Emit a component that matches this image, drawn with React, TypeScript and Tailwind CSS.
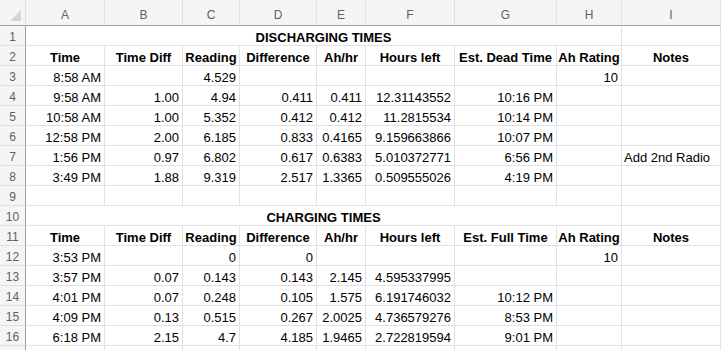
import React from 'react';

type Cell = { v?: string; align?: 'l' | 'c' | 'r'; bold?: boolean; span?: boolean };

const COLS = ['A', 'B', 'C', 'D', 'E', 'F', 'G', 'H', 'I'];

const hdr = (last: string): Cell[] =>
  ['Time', 'Time Diff', 'Reading', 'Difference', 'Ah/hr', 'Hours left', last, 'Ah Rating', 'Notes'].map(v => ({
    v,
    align: 'c',
    bold: true,
  }));

const nums = (vals: string[]): Cell[] => vals.map(v => ({ v, align: 'r' }));

const ROWS: Cell[][] = [
  [{ v: 'DISCHARGING TIMES', align: 'c', bold: true, span: true }, {}],
  hdr('Est. Dead Time'),
  nums(['8:58 AM', '', '4.529', '', '', '', '', '10', '']),
  nums(['9:58 AM', '1.00', '4.94', '0.411', '0.411', '12.31143552', '10:16 PM', '', '']),
  nums(['10:58 AM', '1.00', '5.352', '0.412', '0.412', '11.2815534', '10:14 PM', '', '']),
  nums(['12:58 PM', '2.00', '6.185', '0.833', '0.4165', '9.159663866', '10:07 PM', '', '']),
  [...nums(['1:56 PM', '0.97', '6.802', '0.617', '0.6383', '5.010372771', '6:56 PM', '']), { v: 'Add 2nd Radio', align: 'l' }],
  nums(['3:49 PM', '1.88', '9.319', '2.517', '1.3365', '0.509555026', '4:19 PM', '', '']),
  nums(['', '', '', '', '', '', '', '', '']),
  [{ v: 'CHARGING TIMES', align: 'c', bold: true, span: true }, {}],
  hdr('Est. Full Time'),
  nums(['3:53 PM', '', '0', '0', '', '', '', '10', '']),
  nums(['3:57 PM', '0.07', '0.143', '0.143', '2.145', '4.595337995', '', '', '']),
  nums(['4:01 PM', '0.07', '0.248', '0.105', '1.575', '6.191746032', '10:12 PM', '', '']),
  nums(['4:09 PM', '0.13', '0.515', '0.267', '2.0025', '4.736579276', '8:53 PM', '', '']),
  nums(['6:18 PM', '2.15', '4.7', '4.185', '1.9465', '2.722819594', '9:01 PM', '', '']),
  nums(['', '', '', '', '', '', '', '', '']),
];

function DataCell({ c }: { c: Cell }) {
  const align = c.align === 'c' ? 'justify-center' : c.align === 'l' ? 'justify-start pl-[2px]' : 'justify-end pr-[3px]';
  return (
    <div
      className={`${c.span ? 'col-span-8' : ''} ${align} ${c.bold ? 'font-bold' : ''} flex items-end overflow-hidden whitespace-nowrap border-r border-b border-[#e1e1e1] text-[13px] leading-[15px] text-black`}
    >
      {c.v}
    </div>
  );
}

export default function App() {
  return (
    <div className="h-[350px] w-[721px] overflow-hidden bg-white" style={{ fontFamily: '"Liberation Sans", Arial, sans-serif' }}>
      <div className="grid grid-cols-[26px_79px_78px_57px_77px_49px_89px_102px_65px_99px] grid-rows-[26px] auto-rows-[20px]">
        <div className="flex items-end justify-end border-r border-b border-r-[#e1e1e1] border-b-[#9e9e9e] bg-[#f5f5f5] pr-[4px] pb-[4px]">
          <svg width="11" height="11" viewBox="0 0 11 11">
            <polygon points="11,0 11,11 0,11" fill="#d4d4d4" />
          </svg>
        </div>
        {COLS.map(l => (
          <div
            key={l}
            className="flex items-end justify-center border-r border-b border-r-[#e1e1e1] border-b-[#9e9e9e] bg-[#f5f5f5] pb-[2px] text-[12px] leading-[15px] text-[#616161]"
          >
            {l}
          </div>
        ))}
        {ROWS.map((row, i) => (
          <React.Fragment key={i}>
            {/* last row only peeks in at the bottom edge; its number sits below the fold */}
            <div className="flex items-end justify-center border-r border-b border-r-[#9e9e9e] border-b-[#e1e1e1] bg-[#f5f5f5] text-[12px] leading-[15px] text-[#616161]">
              {i < 16 ? i + 1 : ''}
            </div>
            {row.map((c, j) => (
              <DataCell key={j} c={c} />
            ))}
          </React.Fragment>
        ))}
      </div>
    </div>
  );
}
